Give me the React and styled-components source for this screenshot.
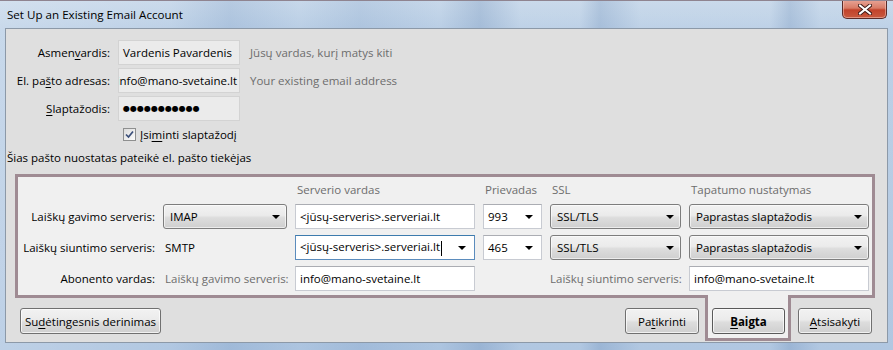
import React from 'react';
import styled, { createGlobalStyle } from 'styled-components';

const Global = createGlobalStyle`
  html, body { margin: 0; padding: 0; }
  body {
    font-family: "Open Sans", "Noto Sans", sans-serif;
    font-size: 11.5px;
    color: #000;
  }
  #root { width: 893px; height: 350px; }
`;

const Frame = styled.div`
  width: 893px;
  height: 350px;
  box-sizing: border-box;
  border-top: 1px solid #8f8490;
  padding-bottom: 7px;
  display: flex;
  flex-direction: column;
  overflow: hidden;
  background:
    linear-gradient(to right,
      rgba(255,255,255,0.25) 0px, rgba(255,255,255,0.1) 170px,
      rgba(120,150,190,0.18) 230px, rgba(255,255,255,0.05) 300px,
      rgba(120,150,190,0.15) 360px, rgba(255,255,255,0.05) 440px,
      rgba(110,140,180,0.25) 480px, rgba(255,255,255,0.1) 520px,
      rgba(255,255,255,0.1) 580px, rgba(110,140,180,0.22) 600px,
      rgba(255,255,255,0.1) 640px, rgba(255,255,255,0.1) 770px,
      rgba(110,140,180,0.22) 790px, rgba(255,255,255,0.1) 820px),
    linear-gradient(to bottom, #c4d6e9 0px, #b6cce4 28px, #a8c1de 100%);
`;

const TitleBar = styled.div`
  height: 27px;
  flex: none;
  display: flex;
  align-items: flex-start;
  padding-left: 7px;
`;

const TitleText = styled.div`
  line-height: 27px;
  font-size: 11.6px;
  color: #000;
`;

const CloseButton = styled.div`
  margin-left: auto;
  margin-right: 6px;
  margin-top: -1px;
  width: 45px;
  height: 19px;
  box-sizing: border-box;
  border: 1px solid #5b2b28;
  border-top: none;
  border-radius: 0 0 5px 5px;
  background: linear-gradient(to bottom, #e8a597 0%, #d87b66 45%, #c2432b 55%, #c95a3f 100%);
  box-shadow: inset 0 0 0 1px rgba(255,220,210,0.45);
  display: flex;
  align-items: center;
  justify-content: center;
`;

const Client = styled.div`
  flex: 1;
  margin: 0 5px;
  border: 1px solid #8c99a8;
  background: #dfdfdf;
  display: flex;
  flex-direction: column;
  padding-top: 11px;
`;

const IdentityGrid = styled.div`
  display: grid;
  grid-template-columns: 103px 122px auto;
  grid-auto-rows: 25px;
  row-gap: 3px;
  padding-left: 1px;
  align-items: center;
`;

const Label = styled.div`
  text-align: right;
  white-space: nowrap;
  color: ${p => (p.$muted ? '#6d6d6d' : '#000')};
`;

const GrayField = styled.div`
  grid-column: 2;
  height: 25px;
  box-sizing: border-box;
  border: 1px solid #d3d3d3;
  background: #ebebeb;
  margin-left: 8px;
  width: 122px;
  display: flex;
  align-items: center;
  justify-content: ${p => (p.$end ? 'flex-end' : 'flex-start')};
  padding: 0 ${p => (p.$end ? '2px' : '4px')} 0 4px;
  overflow: hidden;
  white-space: nowrap;
`;

const Hint = styled.div`
  color: #6d6d6d;
  margin-left: 18px;
  white-space: nowrap;
`;

const Dots = styled.span`
  font-family: "DejaVu Sans", sans-serif;
  font-size: 8px;
  letter-spacing: 0;
`;

const CheckRow = styled.label`
  display: flex;
  align-items: center;
  height: 20px;
  margin-top: 3px;
  padding-left: 117px;
  gap: 4px;
`;

const CheckBox = styled.span`
  width: 13px;
  height: 13px;
  box-sizing: border-box;
  border: 1px solid #8e8f8f;
  background: linear-gradient(to bottom right, #dcdcdc, #fbfbfb);
  display: flex;
  align-items: center;
  justify-content: center;
`;

const Provider = styled.div`
  padding-left: 1px;
  height: 18px;
  line-height: 18px;
  margin-top: 5px;
`;

const ServerBox = styled.div`
  margin: 7px 12px 0 9px;
  border: 3px solid #9f8b93;
  background: #f0f0f0;
  display: grid;
  grid-template-columns: 137px 124px 180px 59px 131px 180px;
  grid-template-rows: 16px 25px 25px 25px;
  column-gap: 8px;
  row-gap: 6px;
  padding: 5px 3px 4px 0;
  align-items: center;
`;

const ColHead = styled.div`
  grid-column: ${p => p.$col};
  color: #6d6d6d;
  line-height: 16px;
  padding-left: 2px;
  white-space: nowrap;
`;

const Arrow = styled.span`
  width: 0;
  height: 0;
  border-left: 4px solid transparent;
  border-right: 4px solid transparent;
  border-top: 4px solid #000;
  flex: none;
`;

const DropButton = styled.div`
  height: 25px;
  box-sizing: border-box;
  border: 1px solid #7d7d7d;
  border-radius: 3px;
  background: linear-gradient(to bottom, #f2f2f2 0%, #ebebeb 45%, #dddddd 55%, #cfcfcf 100%);
  box-shadow: inset 0 0 0 1px rgba(255,255,255,0.6);
  display: flex;
  align-items: center;
  justify-content: space-between;
  padding: 0 6px 0 6px;
  white-space: nowrap;
`;

const TextBox = styled.div`
  height: 25px;
  box-sizing: border-box;
  border: 1px solid ${p => (p.$focus ? '#5b8cbd' : '#c8cbd2')};
  border-top-color: ${p => (p.$focus ? '#3d7bad' : '#abadb3')};
  background: #fff;
  display: flex;
  align-items: center;
  justify-content: space-between;
  padding: 0 ${p => (p.$combo ? '8px' : '4px')} 0 4px;
  white-space: nowrap;
  overflow: hidden;
`;

const Caret = styled.span`
  display: inline-block;
  width: 1px;
  height: 15px;
  background: #000;
  vertical-align: middle;
  margin-left: 1px;
`;

const PlainValue = styled.div`
  padding-left: 2px;
  white-space: nowrap;
  color: ${p => (p.$muted ? '#6d6d6d' : '#000')};
`;

const ButtonRow = styled.div`
  display: flex;
  align-items: flex-start;
  padding: 10px 15px 0 14px;
`;

const Button = styled.button`
  font: inherit;
  color: #000;
  height: 26px;
  width: ${p => p.$w}px;
  box-sizing: border-box;
  border: 1px solid ${p => (p.$default ? '#5a5a5a' : '#707070')};
  border-radius: 3px;
  background: linear-gradient(to bottom, #f2f2f2 0%, #ebebeb 45%, #dddddd 55%, #cfcfcf 100%);
  box-shadow: inset 0 0 0 1px rgba(255,255,255,0.7);
  padding: 0;
  font-weight: ${p => (p.$default ? 700 : 400)};
  margin-left: ${p => p.$ml || 0}px;
  flex: none;
`;

const Spacer = styled.div`
  flex: 1;
`;

const Highlight = styled.div`
  margin-top: -13px;
  margin-left: 6px;
  border: 3px solid #9f8b93;
  border-top: none;
  background: #f0f0f0;
  padding: 13px 3px 4px 4px;
  position: relative;
  z-index: 1;
`;

const U = styled.span`
  text-decoration: underline;
  text-underline-offset: 2px;
`;

const CloseIcon = () => (
  <svg width="14" height="11" viewBox="0 0 14 11">
    <path d="M2 1.5 L12 9.5 M12 1.5 L2 9.5" stroke="#3d1a17" strokeWidth="4" strokeLinecap="square" />
    <path d="M2 1.5 L12 9.5 M12 1.5 L2 9.5" stroke="#ffffff" strokeWidth="2" strokeLinecap="square" />
  </svg>
);

const CheckIcon = () => (
  <svg width="9" height="9" viewBox="0 0 9 9">
    <path d="M1 4.5 L3.5 7 L8 1.5" stroke="#3b4f7a" strokeWidth="1.7" fill="none" />
  </svg>
);

export default function App() {
  return (
    <>
      <Global />
      <Frame>
        <TitleBar>
          <TitleText>Set Up an Existing Email Account</TitleText>
          <CloseButton><CloseIcon /></CloseButton>
        </TitleBar>
        <Client>
          <IdentityGrid>
            <Label>Asmen<U>v</U>ardis:</Label>
            <GrayField>Vardenis Pavardenis</GrayField>
            <Hint>Jūsų vardas, kurį matys kiti</Hint>
            <Label>El. pa<U>š</U>to adresas:</Label>
            <GrayField $end>info@mano-svetaine.lt</GrayField>
            <Hint>Your existing email address</Hint>
            <Label><U>S</U>laptažodis:</Label>
            <GrayField><Dots>●●●●●●●●●●●</Dots></GrayField>
            <span />
          </IdentityGrid>
          <CheckRow>
            <CheckBox><CheckIcon /></CheckBox>
            <span>Įsi<U>m</U>inti slaptažodį</span>
          </CheckRow>
          <Provider>Šias pašto nuostatas pateikė el. pašto tiekėjas</Provider>
          <ServerBox>
            <ColHead $col={3}>Serverio vardas</ColHead>
            <ColHead $col={4}>Prievadas</ColHead>
            <ColHead $col={5}>SSL</ColHead>
            <ColHead $col={6}>Tapatumo nustatymas</ColHead>

            <Label>Laiškų gavimo serveris:</Label>
            <DropButton>IMAP<Arrow /></DropButton>
            <TextBox>&lt;jūsų-serveris&gt;.serveriai.lt</TextBox>
            <TextBox $combo>993<Arrow /></TextBox>
            <DropButton>SSL/TLS<Arrow /></DropButton>
            <DropButton>Paprastas slaptažodis<Arrow /></DropButton>

            <Label>Laiškų siuntimo serveris:</Label>
            <PlainValue>SMTP</PlainValue>
            <TextBox $combo $focus><span>&lt;jūsų-serveris&gt;.serveriai.lt<Caret /></span><Arrow /></TextBox>
            <TextBox $combo>465<Arrow /></TextBox>
            <DropButton>SSL/TLS<Arrow /></DropButton>
            <DropButton>Paprastas slaptažodis<Arrow /></DropButton>

            <Label>Abonento vardas:</Label>
            <PlainValue $muted>Laiškų gavimo serveris:</PlainValue>
            <TextBox>info@mano-svetaine.lt</TextBox>
            <span />
            <Label $muted>Laiškų siuntimo serveris:</Label>
            <TextBox>info@mano-svetaine.lt</TextBox>
          </ServerBox>
          <ButtonRow>
            <Button $w={141}>Su<U>d</U>ėtingesnis derinimas</Button>
            <Spacer />
            <Button $w={74}>Pa<U>t</U>ikrinti</Button>
            <Highlight>
              <Button $w={73} $default><U>B</U>aigta</Button>
            </Highlight>
            <Button $w={74} $ml={7}><U>A</U>tsisakyti</Button>
          </ButtonRow>
        </Client>
      </Frame>
    </>
  );
}
